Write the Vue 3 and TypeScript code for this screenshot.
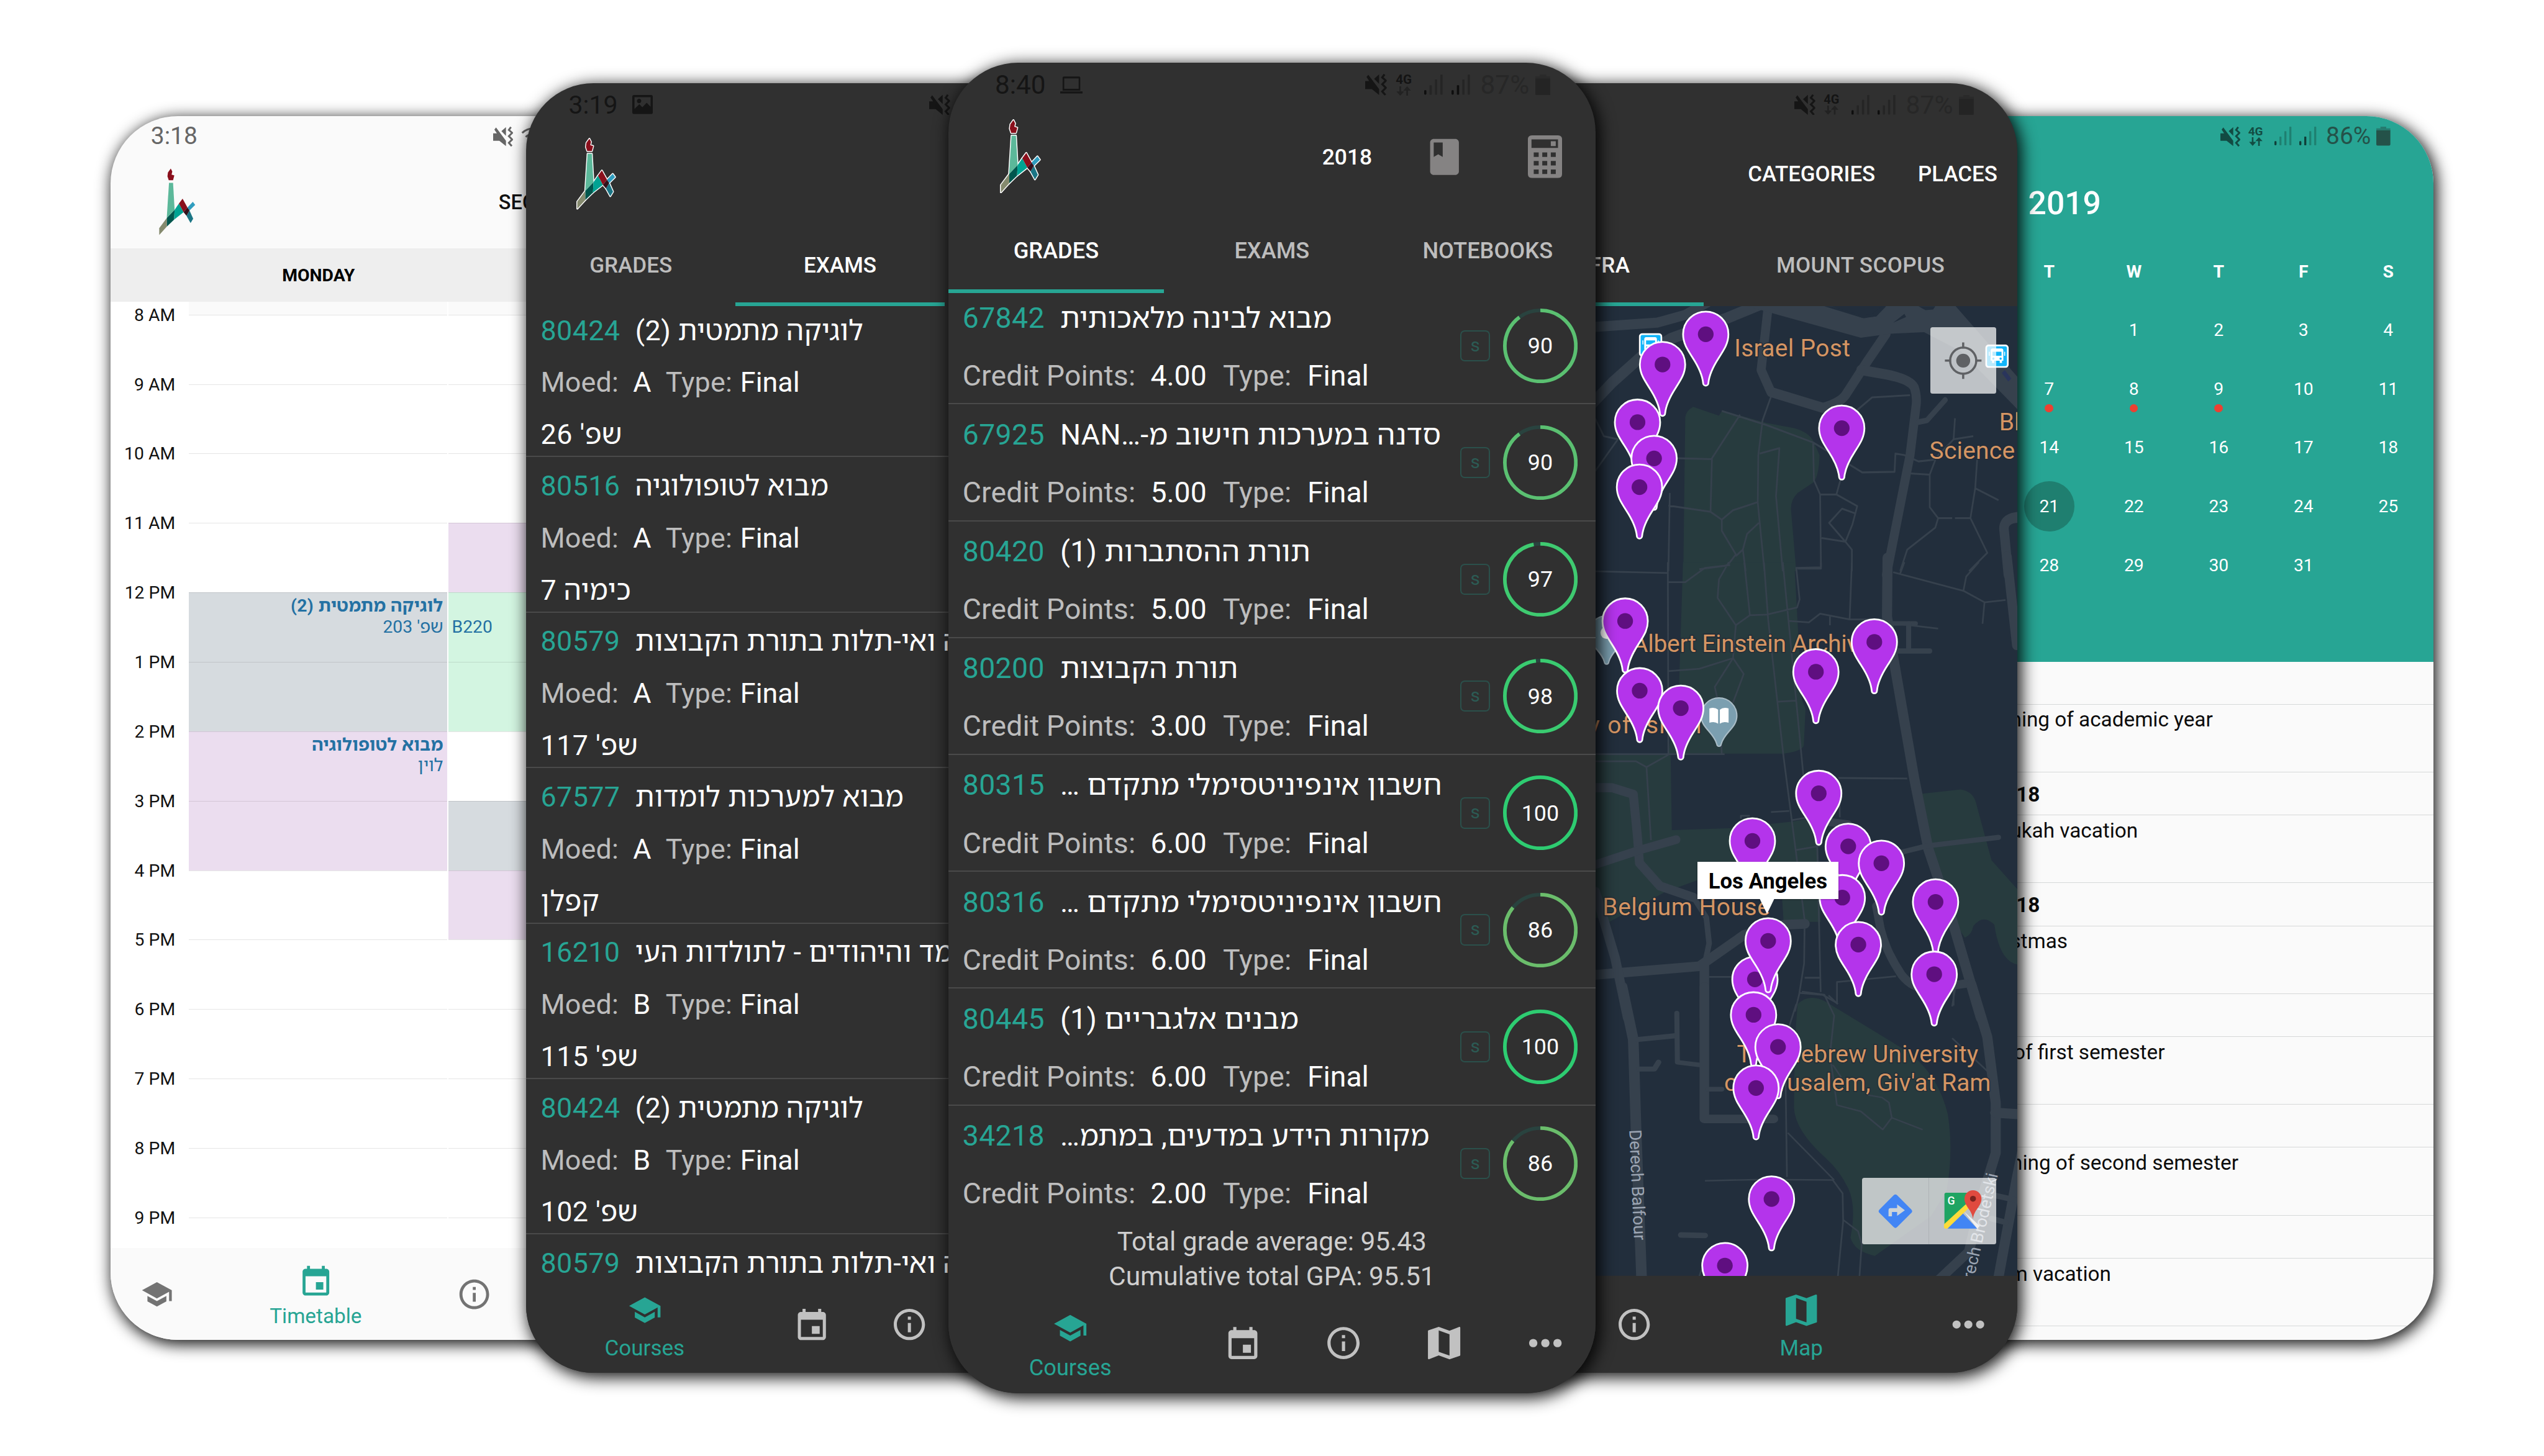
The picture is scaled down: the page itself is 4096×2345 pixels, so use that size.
<script setup lang="ts">
interface NavItem { icon: string; label?: string; active?: boolean }
interface Phone {
  kind: 'timetable' | 'exams' | 'grades' | 'map' | 'calendar'
  time: string
  timeIcon?: string
  battery: string
  nav: NavItem[]
}

const phones: Phone[] = [
  { kind: 'timetable', time: '3:18', battery: '', nav: [{ icon: 'school' }, { icon: 'event', label: 'Timetable', active: true }, { icon: 'info' }, { icon: 'map' }, { icon: 'more' }] },
  { kind: 'exams', time: '3:19', timeIcon: 'picture', battery: '', nav: [{ icon: 'school', label: 'Courses', active: true }, { icon: 'event' }, { icon: 'info' }, { icon: 'map' }, { icon: 'more' }] },
  { kind: 'grades', time: '8:40', timeIcon: 'laptop', battery: '87%', nav: [{ icon: 'school', label: 'Courses', active: true }, { icon: 'event' }, { icon: 'info' }, { icon: 'map' }, { icon: 'more' }] },
  { kind: 'map', time: '', battery: '87%', nav: [{ icon: 'school' }, { icon: 'event' }, { icon: 'info' }, { icon: 'map', label: 'Map', active: true }, { icon: 'more' }] },
  { kind: 'calendar', time: '', battery: '86%', nav: [] },
]

const logo = [
  { fill: '#8a0f1c', d: 'M27.5 0 20.8 9 19.6 18 22.7 27H33L36 16 29.4 14 31.2 7Z' },
  { fill: '#5cb89a', d: 'M23.3 33H33L36.7 95.5 18 114Z' },
  { fill: '#858a6e', d: 'M0 138 18.4 114V134L0 153.6Z' },
  { fill: '#00564d', d: 'M18.4 114 36.7 95.5 35.5 118 18.4 134Z' },
  { fill: '#00a393', d: 'M36.7 95.5 47 81 58 101 35.5 118Z' },
  { fill: '#8a0f1c', d: 'M47 81 55.7 69.6 67.3 90 58 101Z' },
  { fill: '#2f9dbf', d: 'M67.3 90 80.2 77 85.7 84 72.2 97Z' },
  { fill: '#1b7585', d: 'M65 109 72.2 97 81 116 74.7 126Z' },
  { fill: '#33101b', d: 'M58 101 67.3 90 72.2 97 65 109Z' },
]

const hours = ['8 AM', '9 AM', '10 AM', '11 AM', '12 PM', '1 PM', '2 PM', '3 PM', '4 PM', '5 PM', '6 PM', '7 PM', '8 PM', '9 PM']

interface Lesson { row: number; span: number; tone: string; title?: string; room?: string; ltr?: boolean }
const days: Lesson[][] = [
  [
    { row: 5, span: 2, tone: 'grey', title: 'לוגיקה מתמטית (2)', room: "שפ' 203" },
    { row: 7, span: 2, tone: 'lilac', title: 'מבוא לטופולוגיה', room: 'לוין' },
  ],
  [
    { row: 4, span: 1, tone: 'lilac' },
    { row: 5, span: 2, tone: 'green', title: '\u00a0', room: 'B220', ltr: true },
    { row: 8, span: 1, tone: 'grey' },
    { row: 9, span: 1, tone: 'lilac' },
  ],
]

const exams = [
  { code: '80424', title: 'לוגיקה מתמטית (2)', moed: 'A', room: "שפ' 26" },
  { code: '80516', title: 'מבוא לטופולוגיה', moed: 'A', room: 'כימיה 7' },
  { code: '80579', title: 'ה ואי-תלות בתורת הקבוצות', moed: 'A', room: "שפ' 117" },
  { code: '67577', title: 'מבוא למערכות לומדות', moed: 'A', room: 'קפלן' },
  { code: '16210', title: 'מד והיהודים - לתולדות העי', moed: 'B', room: "שפ' 115" },
  { code: '80424', title: 'לוגיקה מתמטית (2)', moed: 'B', room: "שפ' 102" },
  { code: '80579', title: 'ה ואי-תלות בתורת הקבוצות', moed: '', room: '' },
]

const grades = [
  { code: '67842', title: 'מבוא לבינה מלאכותית', points: '4.00', grade: 90, color: '#5bc071' },
  { code: '67925', title: 'סדנה במערכות חישוב מ-…NAN', points: '5.00', grade: 90, color: '#5bc071' },
  { code: '80420', title: 'תורת ההסתברות (1)', points: '5.00', grade: 97, color: '#3fca70' },
  { code: '80200', title: 'תורת הקבוצות', points: '3.00', grade: 98, color: '#3acb70' },
  { code: '80315', title: 'חשבון אינפיניטסימלי מתקדם …', points: '6.00', grade: 100, color: '#2ecc71' },
  { code: '80316', title: 'חשבון אינפיניטסימלי מתקדם …', points: '6.00', grade: 86, color: '#6bbd6b' },
  { code: '80445', title: 'מבנים אלגבריים (1)', points: '6.00', grade: 100, color: '#2ecc71' },
  { code: '34218', title: 'מקורות הידע במדעים, במתמ…', points: '2.00', grade: 86, color: '#6bbd6b' },
]

const pins: [number, number][] = [
  [724.6, 577.6], [625.4, 647], [568, 779.5], [606, 862.7], [572.5, 928.6], [1036.7, 793.2],
  [539.6, 1236], [1111.5, 1284], [977.4, 1352.5], [573, 1396], [667.3, 1436], [983.9, 1631.5],
  [831.7, 1740.7], [1051.6, 1753.2], [1038, 1871], [1127.7, 1792], [1252, 1880.8], [1074.8, 1978.9],
  [1248.9, 2046.7], [837.5, 2058.5], [867.8, 1970.3], [834.3, 2140], [890.4, 2213.7], [840, 2308],
  [875.5, 2562.8], [768.5, 2715.6],
]

interface Tile { frame: string; parks: string[]; wide: [number, string][]; thin: string }
/* The map is stored in three tiles, each in its own survey grid. */
const tiles: Tile[] = [
  {
    frame: 'matrix(.6448 0 0 .7237 451.9 -14.4)',
    parks: ['M343 1568 350 1080Q352 1060 378 1047L470 1075 482 1058 535 1072 640 1098 740 1115Q795 1130 808 1160L828 1200Q825 1280 800 1290L750 1320Q722 1345 727 1380L745 1568Z'],
    wide: [
      [32, 'M0 795 250 780 350 755 430 715'],
      [36, 'M10 1045 90 970 190 890 300 830 500 765 650 710'],
      [32, 'M645 730 620 930 655 1000 840 1050Q900 1035 920 1010L1000 900 1065 815'],
      [32, 'M975 930 1070 945Q1150 960 1165 985 1175 1010 1172 1040L1150 1200 1066 1580'],
      [18, 'M1180 1095 1210 1090 1275 1025'],
      [34, 'M1550 1395 1515 1400Q1480 1410 1485 1440L1500 1580'],
    ],
    thin: 'M655 1015 625 1090 610 1200 608 1350 632 1568M480 1060 640 1105 805 1160 870 1195 980 1255 1095 1253 1098 1195 1130 1200 1180 1220 1235 1215M545 1072 445 1210 440 1380 480 1405V1440L530 1515 500 1550 400 1562M320 1210 445 1213M295 1320 290 1568M290 1360 440 1380M480 1405 520 1375 605 1350M615 1195 685 1178 673 1330 697 1568M612 1415 570 1450 555 1500 565 1568M555 1500 530 1520M805 1160 808 1280 830 1325 833 1560H750M830 1325H888L905 1270M888 1325 962 1362 945 1420 920 1475 835 1463M955 1385 908 1370 862 1415 920 1475 943 1500V1568M905 1100 1015 1017 1150 1010M1150 1258 1220 1262V1365L1250 1400H1300M1240 1215 1220 1262M1310 1083 1305 1150 1240 1210M1305 1150 1375 1140M1390 1200 1382 1305 1365 1400H1310M1382 1305 1465 1343M1365 1400 1425 1510 1360 1568M1250 1400 1240 1430 1140 1500 1115 1568M30 1085 60 1140 110 1150 30 1250',
  },
  {
    frame: 'matrix(.6448 0 0 .658 451.9 1099.8)',
    parks: [
      'M342 0 328 430 290 668H700Q765 660 772 640L778 512 765 480 738 0Z',
      'M0 668 298 672 302 935 520 928 730 905 820 890 832 1255H700L690 1100H420L280 1150 80 1255 0 1230Z',
      'M1190 808 1330 793Q1375 800 1385 840L1440 1040 1540 1150V1405Q1470 1400 1450 1265 1410 1225 1375 1270 1370 1300 1345 1310L1290 1230 1250 1080Z',
    ],
    wide: [
      [36, 'M1070 -15 1068 190 1090 330 1165 755 1215 1000 1300 1250 1402 1590'],
      [16, 'M1080 214H1170'], [18, 'M1145 215V300'], [18, 'M1100 310H1220'],
      [34, 'M1495 -20 1530 290'],
      [32, 'M0 787H90L165 810 180 960 187 1050 260 1130 380 1170'],
      [20, 'M380 1170 425 1240 435 1330 420 1400'],
      [30, 'M0 1065 185 1005 318 968'],
      [34, 'M0 1442 400 1410 560 1300 700 1265 776 1262'],
      [34, 'M30 1150 100 1380 145 1590'],
      [34, 'M418 1400V1590'],
      [18, 'M1120 1012 1210 990 1465 960'],
      [28, 'M850 905 930 915'],
      [30, 'M1030 1200 1045 1280Q1065 1360 1120 1440 1160 1490 1220 1488L1350 1470'],
    ],
    thin: 'M30 32 288 38M288 0 290 670M290 70H350L420 20 510 10M505 0 470 60 465 125 530 220 520 335 558 390 520 490M520 335 455 435 470 500 480 670M290 380 400 372 520 335M530 220 580 185 640 183 748 158 757 130 745 20 833 18V0M560 0 580 185M630 0 645 200 700 680 745 1020 775 1250 773 1400 755 1510 740 1568M697 0 720 230 770 740 820 1000 832 1500M720 205 790 210 830 180 935 200 1055 200M865 190V220M943 0 935 200M680 487 745 483M895 753 1140 755M898 780 900 890M30 670H490M30 695H175L212 715 290 672M212 715 228 970M655 872 720 868M730 900 820 885M740 1005 830 990M548 895V885H580M1090 35 1340 100 1415 140 1490 132M1415 140 1408 215M1340 100 1350 50 1395 0M1130 0 1115 40M1105 215 1250 232M775 1450H833M435 1447H520M890 1540V1465L1100 1445M755 1503 840 1510 893 1540M1310 1490 1300 1550',
  },
  {
    frame: 'matrix(.6448 0 0 .579 451.9 2079.9)',
    parks: ['M750 60Q790 15 850 50L1130 240Q1250 330 1285 500 1305 650 1280 800L1225 900 1025 1058Q950 1040 938 985 960 860 930 790 900 720 850 670 740 560 737 470L740 200Z'],
    wide: [
      [38, 'M125 -10 165 200 175 560 195 1160'],
      [20, 'M180 200 315 185'], [18, 'M320 95 322 290 410 302'], [20, 'M185 317H240L255 290'],
      [34, 'M418 -10V515H664'], [18, 'M430 397H480'], [22, 'M335 975 420 977'],
      [36, 'M1368 -20 1425 190 1455 450V650L1400 850 1360 1040 1255 1150'],
      [40, 'M1455 490 1550 497'], [36, 'M1550 640 1530 750 1462 1160'], [22, 'M1440 815 1540 840M1440 910 1490 925'],
    ],
    thin: 'M745 60 705 200 712 745M420 760 620 755 875 757 910 810 912 920 893 1140M715 570 880 757M912 915 965 960 978 1010 970 1140M765 10 845 22 880 105 865 260 890 460 975 485 1053 557 1085 510 1195 557M1085 510 1075 450 1050 430 1000 420M875 300 905 350M1300 195 1430 330M1305 0V65M400 1140 412 1095M860 25 893 60',
  },
]

const weekdays = ['S', 'M', 'T', 'W', 'T', 'F', 'S']
const monthCells: (number | null)[] = [null, null, null, ...Array.from({ length: 31 }, (_, i) => i + 1), null]
const marked = [7, 8, 9]

const agenda = [
  { date: 'October 14, 2018', dateEnd: 436, title: 'Beginning of academic year', end: 907 },
  { date: 'December 9, 2018', dateEnd: 489, title: 'Hanukah vacation', end: 726 },
  { date: 'December 25, 2018', dateEnd: 489, title: 'Christmas', end: 556 },
  { date: 'January 20, 2019', dateEnd: 436, title: 'End of first semester', end: 791 },
  { date: 'March 3, 2019', dateEnd: 400, title: 'Beginning of second semester', end: 969 },
  { date: 'March 21, 2019', dateEnd: 400, title: 'Purim vacation', end: 661 },
]
</script>

<template>
  <svg class="defs" width="0" height="0">
    <symbol id="mute" viewBox="0 0 48 48">
      <path d="M0 16H9L3 7 7 2 31 34V47L15 34H0ZM20 11 31 1V22Z" />
      <path d="M43 1 38 8 46 15 38 23 46 31 38 39 45 47" fill="none" stroke="currentColor" stroke-width="4.5" />
    </symbol>
    <symbol id="wifi" viewBox="0 0 60 48">
      <g fill="none" stroke="currentColor" stroke-width="5"><path d="M3 16A38 38 0 0 1 57 16M12 26A26 26 0 0 1 48 26M21 35A13 13 0 0 1 39 35" /></g>
      <circle cx="30" cy="43" r="4" />
    </symbol>
    <symbol id="arrows" viewBox="0 0 36 22">
      <path d="M8 0H12V12H19L10 22 1 12H8ZM24 22H28V10H35L26 0 17 10H24Z" />
    </symbol>
    <symbol id="picture" viewBox="0 0 47 44">
      <path fill-rule="evenodd" d="M4 0H43Q47 0 47 4V40Q47 44 43 44H4Q0 44 0 40V4Q0 0 4 0ZM5 5V32L16 21 23 28 33 18 42 27V5ZM14 9A5 5 0 1 1 14 18.500 5 5 0 0 1 14 9Z" />
    </symbol>
    <symbol id="laptop" viewBox="0 0 56 42">
      <path fill-rule="evenodd" d="M9 0H47Q50 0 50 3V35H6V3Q6 0 9 0ZM10 4.500V30.500H46V4.500ZM0 37H56V42H0Z" />
    </symbol>
    <symbol id="school" viewBox="-1.15 -1.15 26.3 26.3"><path d="M5 13.180v4L12 21l7-3.820v-4L12 17l-7-3.820zM12 3L1 9l11 6 9-4.910V17h2V9L12 3z" /></symbol>
    <symbol id="event" viewBox="0 -1 24 24"><path d="M17 12h-5v5h5v-5zM16 1v2H8V1H6v2H5c-1.110 0-1.990.9-1.990 2L3 19c0 1.100.89 2 2 2h14c1.100 0 2-.9 2-2V5c0-1.100-.9-2-2-2h-1V1h-2zm3 18H5V8h14v11z" /></symbol>
    <symbol id="info" viewBox="0 0 24 24"><path d="M11 17h2v-6h-2v6zm1-15C6.480 2 2 6.480 2 12s4.480 10 10 10 10-4.480 10-10S17.520 2 12 2zm0 18c-4.410 0-8-3.590-8-8s3.590-8 8-8 8 3.590 8 8-3.590 8-8 8zM11 9h2V7h-2v2z" /></symbol>
    <symbol id="map" viewBox="26.5 26.5 459 459"><path d="M437.333 64c-2.176 0-4.396 1.369-9.176 3.207L320 108.802 192 64 71.469 104.531C67.197 105.604 64 109.864 64 115.197v322.136C64 443.729 68.271 448 74.666 448c1.828 0 6.505-2.330 9.087-3.319L192 403.197 320 448l120.531-40.531c4.271-1.073 7.469-5.334 7.469-10.667V74.666C448 68.271 443.729 64 437.333 64zM320 405.333l-128-44.802V106.666l128 44.803v253.864z" /></symbol>
    <symbol id="more" viewBox="0 0 86 86"><circle cx="16" cy="43" r="9.300" /><circle cx="43" cy="43" r="9.300" /><circle cx="70" cy="43" r="9.300" /></symbol>
    <symbol id="book" viewBox="0 0 24 24"><path d="M18 2H6c-1.100 0-2 .9-2 2v16c0 1.100.9 2 2 2h12c1.100 0 2-.9 2-2V4c0-1.100-.9-2-2-2zM6 4h5v8l-2.500-1.500L6 12V4z" /></symbol>
    <symbol id="calc" viewBox="0 0 76 95">
      <path fill-rule="evenodd" d="M9 0H67Q76 0 76 9V86Q76 95 67 95H9Q0 95 0 86V9Q0 0 9 0ZM8 9V28H67V9ZM13 38V48H24V38ZM32 38V48H43V38ZM51 38V48H62V38ZM13 57V67H24V57ZM32 57V67H43V57ZM51 57V67H62V57ZM13 76V86H24V76ZM32 76V86H43V76ZM51 76V86H62V76Z" />
      <path d="M51 13H62V24H51Z" />
    </symbol>
    <symbol id="logo" viewBox="-2 -2 89.7 157.6" preserveAspectRatio="none"><path v-for="(p, i) in logo" :key="i" :d="p.d" :fill="p.fill" /></symbol>
    <symbol id="logo-edge" viewBox="-2 -2 89.7 157.6" preserveAspectRatio="none">
      <path v-for="(p, i) in logo" :key="i" :d="p.d" fill="#fff" stroke="#fff" stroke-width="4" stroke-linejoin="round" />
    </symbol>
    <symbol id="bus" viewBox="0 0 52 52">
      <rect x="2" y="2" width="48" height="48" rx="6" fill="#12b5f9" stroke="#fff" stroke-width="4" />
      <path fill="#fff" fill-rule="evenodd" d="M16 9H36Q40 9 40 14V36H37V41H32V36H20V41H15V36H12V14Q12 9 16 9ZM16 16V25H36V16ZM18 29A2.500 2.500 0 1 0 18 34 2.500 2.500 0 1 0 18 29ZM34 29A2.500 2.500 0 1 0 34 34 2.500 2.500 0 1 0 34 29ZM8 16H10V25H8ZM42 16H44V25H42Z" />
    </symbol>
  </svg>

  <div class="stage">
    <div v-for="p in phones" :key="p.kind" class="slot" :class="p.kind">
      <div class="phone">
        <div class="status">
          <span class="time">{{ p.time }}</span>
          <svg v-if="p.timeIcon" class="time-icon"><use :href="'#' + p.timeIcon" /></svg>
          <div class="tray">
            <svg class="mute"><use href="#mute" /></svg>
            <svg v-if="!p.battery" class="wifi"><use href="#wifi" /></svg>
            <template v-else>
              <div class="lte"><b>4G</b><svg><use href="#arrows" /></svg></div>
              <svg v-for="n in 2" :key="n" class="signal" viewBox="0 0 42 46">
                <rect class="on" x="0" y="35" width="5" height="10" rx="2" />
                <rect :class="{ on: n === 2 && p.kind !== 'map' }" x="12" y="24" width="5" height="21" rx="1" />
                <rect x="24" y="11" width="5" height="34" rx="1" />
                <rect x="36" y="0" width="5" height="45" rx="1" />
              </svg>
              <span class="pct">{{ p.battery }}</span>
              <svg class="battery" viewBox="0 0 34 46"><path opacity=".5" d="M10 0H24V4H34V10H0V4H10Z" /><path d="M0 9H34V43Q34 46 31 46H3Q0 46 0 43Z" /></svg>
            </template>
          </div>
        </div>

        <template v-if="p.kind === 'timetable'">
          <div class="appbar">
            <svg class="logo"><use href="#logo" /></svg>
            <span class="semester">SECOND SEMESTER</span>
          </div>
          <div class="day-head"><span>MONDAY</span></div>
          <div class="week">
            <div class="hours"><div v-for="h in hours" :key="h">{{ h }}</div></div>
            <div v-for="(day, di) in days" :key="di" class="day">
              <i v-for="(h, hi) in hours" :key="h" :style="{ gridRow: hi + 1 }"></i>
              <div v-for="(l, li) in day" :key="li" class="lesson" :class="[l.tone, { ltr: l.ltr }]" :style="{ gridRow: `${l.row} / span ${l.span}` }">
                <b>{{ l.title }}</b><span>{{ l.room }}</span>
              </div>
            </div>
          </div>
        </template>

        <template v-else-if="p.kind === 'exams'">
          <div class="appbar">
            <svg class="logo"><use href="#logo-edge" /><use href="#logo" /></svg>
          </div>
          <div class="tabs"><span>GRADES</span><span class="on">EXAMS</span><span></span></div>
          <div class="list exam-list">
            <div v-for="(e, i) in exams" :key="i" class="exam">
              <div class="line"><span class="code">{{ e.code }}</span><span class="title" dir="rtl">{{ e.title }}</span></div>
              <template v-if="e.moed">
                <div class="line"><span class="label moed">Moed:</span><span class="moed-value">{{ e.moed }}</span><span class="label type">Type:</span><span>Final</span></div>
                <div class="line"><span class="title" dir="rtl">{{ e.room }}</span></div>
              </template>
            </div>
          </div>
        </template>

        <template v-else-if="p.kind === 'grades'">
          <div class="appbar">
            <svg class="logo"><use href="#logo-edge" /><use href="#logo" /></svg>
            <span class="year">2018</span>
            <svg class="book"><use href="#book" /></svg>
            <svg class="calc"><use href="#calc" /></svg>
          </div>
          <div class="tabs"><span class="on">GRADES</span><span>EXAMS</span><span>NOTEBOOKS</span></div>
          <div class="list grade-list">
            <div v-for="g in grades" :key="g.code" class="grade">
              <div class="info">
                <div class="line"><span class="code">{{ g.code }}</span><span class="title" dir="rtl">{{ g.title }}</span></div>
                <div class="line"><span class="label points">Credit Points:</span><span class="points-value">{{ g.points }}</span><span class="label type">Type:</span><span>Final</span></div>
              </div>
              <div class="badge">s</div>
              <div class="ring">
                <svg viewBox="0 0 166 166">
                  <circle cx="83" cy="83" r="79" stroke="#29433f" />
                  <circle cx="83" cy="83" r="79" :stroke="g.color" pathLength="100" :stroke-dasharray="`${g.grade} 100`" transform="rotate(-90 83 83)" />
                </svg>
                <span>{{ g.grade }}</span>
              </div>
            </div>
          </div>
          <div class="totals"><div>Total grade average: 95.43</div><div>Cumulative total GPA: 95.51</div></div>
        </template>

        <template v-else-if="p.kind === 'map'">
          <div class="appbar right"><span>CATEGORIES</span><span>PLACES</span></div>
          <div class="tabs"><span class="on">EDMOND SAFRA</span><span>MOUNT SCOPUS</span></div>
          <div class="map-view">
            <svg class="ground" viewBox="0 512 1440 2226">
              <rect y="512" width="1440" height="2226" fill="#222e3c" />
              <g v-for="(t, i) in tiles" :key="i" :transform="t.frame">
                <path v-for="d in t.parks" :key="d" :d="d" fill="#273b3e" />
              </g>
              <g v-for="(t, i) in tiles" :key="'r' + i" :transform="t.frame" fill="none" stroke="#36414d" stroke-linejoin="round">
                <path :d="t.thin" stroke-width="6" />
                <path v-for="w in t.wide" :key="w[1]" :d="w[1]" :stroke-width="w[0]" stroke-linecap="round" />
              </g>
              <g :transform="tiles[0].frame">
                <path fill="#36414d" d="M560 720H850L980 765 1030 760 1070 720H1305L1540 960V1062L1330 870 1200 810 1080 815 975 828 700 760 560 725Z" />
                <path fill="#222e3c" d="M845 728 985 766 1030 760 1065 728H1050L1015 752 980 757 870 728ZM1090 780 1130 752 1136 762ZM1180 728 1205 740 1232 738 1240 728Z" />
                <path fill="none" stroke="#2a355c" stroke-width="14" d="M1482 935 1505 962" />
              </g>
              <g transform="translate(755 1452.5)"><path d="M0-41A41 41 0 0 1 41 0C41 28 12 38 5 65A5 5 0 0 1-5 65C-12 38-41 28-41 0A41 41 0 0 1 0-41Z" fill="#7b9fb0" stroke="#a9bcc6" stroke-width="3" /><path d="M-22-17Q-10-21-2-14V18Q-10 12-22 16ZM22-17Q10-21 2-14V18Q10 12 22 16Z" fill="#fff" /></g>
              <g transform="translate(497 1264)"><path d="M0-41A41 41 0 0 1 41 0C41 28 12 38 5 65A5 5 0 0 1-5 65C-12 38-41 28-41 0A41 41 0 0 1 0-41Z" fill="#7b9fb0" stroke="#a9bcc6" stroke-width="3" /><circle r="14" cy="-2" fill="#fff" /></g>
              <use href="#bus" x="571" y="574" width="54" height="54" />
              <use href="#bus" x="1366" y="600" width="54" height="54" />
              <g class="poi">
                <text x="790" y="627" textLength="266">Israel Post</text>
                <text x="1398" y="797">Bloomfield</text>
                <text x="1238" y="862" textLength="196">Science</text>
                <text x="556" y="1306" textLength="576">Albert Einstein Archives</text>
                <text x="455" y="1493" textLength="260">y of Israel</text>
                <text x="488" y="1910" textLength="384">Belgium House</text>
                <text x="796" y="2248" textLength="554">The Hebrew University</text>
                <text x="767" y="2314" textLength="612">of Jerusalem, Giv'at Ram</text>
              </g>
              <g class="street">
                <text transform="translate(549 2403) rotate(87.500)" textLength="254">Derech Balfour</text>
                <text transform="translate(1329 2793) rotate(-77)" textLength="295">Derech Brodetski</text>
              </g>
              <g v-for="(c, i) in pins" :key="i" :transform="`translate(${c[0]} ${c[1] - 1})`">
                <path d="M0-52A52 52 0 0 1 52 0C52 20 43 34 30 54 17 74 8 92 6 112A6 6 0 0 1-6 112C-8 92-17 74-30 54-43 34-52 20-52 0A52 52 0 0 1 0-52Z" fill="#b434eb" stroke="#fff" stroke-width="4" />
                <circle r="18" fill="#5f0f80" />
              </g>
            </svg>
            <div class="callout">Los Angeles</div>
            <div class="locate">
              <svg viewBox="0 0 88 88"><g fill="none" stroke="#5f6164" stroke-width="5"><circle cx="44" cy="44" r="30" /><path d="M44 2V16M44 72V86M2 44H16M72 44H86" /></g><circle cx="44" cy="44" r="16" fill="#5f6164" /></svg>
            </div>
            <div class="routes">
              <div><svg viewBox="0 0 80 80"><path fill="#4285f4" d="M36 3Q40-1 44 3L77 36Q81 40 77 44L44 77Q40 81 36 77L3 44Q-1 40 3 36Z" /><path fill="#cdd3d6" d="M24 52V38Q24 33 29 33H44V24L62 38 44 51V42H32V52Z" /></svg></div>
              <div>
                <svg class="gmaps" viewBox="0 0 88 88">
                  <path fill="#1fa463" d="M5 6H55V40L4 86 1 82V10Q1 6 5 6Z" />
                  <path fill="#4285f4" d="M42 52 78 90H8Z" />
                  <path fill="#fddb3a" d="M0 80 52 32 58 42 8 90H4Q0 90 0 86Z" />
                  <path fill="#f1f1f1" d="M47 50 84 84 78 90Z" />
                  <path fill="#e04a3f" d="M68 0A20 20 0 0 1 88 20C88 38 70 46 68 68 66 46 48 38 48 20A20 20 0 0 1 68 0Z" />
                  <circle cx="68" cy="20" r="7" fill="#7b231e" />
                  <text x="8" y="34">G</text>
                </svg>
              </div>
            </div>
          </div>
        </template>

        <template v-else>
          <div class="month">
            <div class="month-title">May 2019</div>
            <div class="grid heads"><span v-for="(w, i) in weekdays" :key="i">{{ w }}</span></div>
            <div class="grid dates">
              <span v-for="(d, i) in monthCells" :key="i" :class="{ today: d === 21 }"><em>{{ d }}</em><i v-if="d && marked.includes(d)"></i></span>
            </div>
          </div>
          <div class="agenda">
            <template v-for="a in agenda" :key="a.title">
              <div class="date"><span :style="{ width: a.dateEnd + 'px' }">{{ a.date }}</span></div>
              <div class="entry"><span :style="{ width: a.end + 'px' }">{{ a.title }}</span></div>
            </template>
          </div>
        </template>

        <div v-if="p.nav.length" class="nav">
          <div v-for="n in p.nav" :key="n.icon" :class="{ active: n.active }">
            <svg><use :href="'#' + n.icon" /></svg>
            <span v-if="n.label">{{ n.label }}</span>
          </div>
        </div>
      </div>
    </div>
  </div>
</template>

<style>
body { background: #fff; overflow: hidden; }
</style>

<style scoped>
svg { display: block; flex: none; fill: currentColor; }
.defs { position: absolute; }
.stage {
  zoom: 0.7238;
  width: 5659px;
  height: 3240px;
  display: flex;
  align-items: center;
  justify-content: center;
  background: #fff;
  font-family: Roboto, "Noto Sans Hebrew", "Liberation Sans", sans-serif;
}
.slot { position: relative; flex: none; }
.timetable, .calendar { z-index: 1; width: 1325px; height: 2723px; }
.exams, .map { z-index: 2; width: 1396px; height: 2869px; }
.grades { z-index: 3; width: 1440px; height: 2960px; margin: 0 -457.5px; }
.exams { margin-left: -400.5px; }
.map { margin-right: -400px; }
.phone {
  width: 1440px;
  height: 2960px;
  display: flex;
  flex-direction: column;
  overflow: hidden;
  border-radius: 155px;
  background: #303030;
  color: #fff;
  box-shadow: 6px 8px 36px 3px rgba(0, 0, 0, 0.9);
}
.timetable .phone, .calendar .phone { zoom: 0.92; border-radius: 163px; background: #fafafa; color: #111; }
.exams .phone, .map .phone { zoom: 0.9693; }

/* status bar */
.status { flex: none; height: 98px; display: flex; align-items: center; padding-left: 104px; color: #151515; font-size: 58.5px; line-height: 60px; }
.timetable .status { color: #666; }
.timetable .status, .exams .status { padding-left: 97px; }
.time-icon { width: 50px; height: 44px; margin-left: 32px; }
.tray { margin-left: auto; width: 512px; display: flex; align-items: center; }
.timetable .tray, .exams .tray, .calendar .tray { width: 515px; }
.mute { width: 48px; height: 48px; }
.wifi { width: 60px; height: 46px; margin-left: 18px; }
.lte { width: 37px; margin: 0 27px 0 19px; display: flex; flex-direction: column; align-items: center; gap: 2px; color: #141414; }
.lte b { font-size: 28.5px; line-height: 24px; font-weight: 700; }
.lte svg { width: 36px; height: 21px; color: #222; }
.signal { width: 42px; height: 46px; margin-right: 18px; color: #252525; }
.signal .on { fill: #0e0e0e; }
.pct { width: 109px; margin-left: 5px; color: #272727; }
.battery { width: 34px; height: 46px; margin-left: 13px; color: #242424; }
.calendar .status { color: #124b43; }
.calendar .lte, .calendar .lte svg { color: #134c43; }
.calendar .signal { color: #1f8071; }
.calendar .signal .on { fill: #0f3f38; }
.calendar .pct, .calendar .battery { color: #245249; }

/* app bar and tabs */
.appbar { flex: none; height: 222px; display: flex; align-items: center; padding-left: 115px; font-size: 49.7px; font-weight: 500; }
.logo { width: 91px; height: 165px; margin-top: -3px; }
.semester { margin-left: 732px; white-space: nowrap; font-size: 49px; }
.year { margin-left: auto; font-size: 49px; }
.book { width: 96px; height: 96px; margin: 0 138px 0 113px; color: #858383; }
.calc { width: 76px; height: 95px; margin-right: 74px; color: #858383; }
.right { justify-content: flex-end; gap: 98px; padding-right: 46px; }
.tabs { flex: none; height: 192px; display: flex; font-size: 50px; font-weight: 500; color: #bdbdbd; }
.tabs span { flex: 1 1 0; display: flex; align-items: center; justify-content: center; border-bottom: 9px solid transparent; padding-top: 11px; }
.tabs .on { color: #fff; border-color: #27a594; }
.map .tabs span { letter-spacing: 0.6px; }

/* course rows */
.list { flex: none; overflow: hidden; font-size: 64px; line-height: 80px; white-space: nowrap; }
.line { display: flex; align-items: center; }
.code { color: #27a594; width: 217px; letter-spacing: 0.5px; }
.title { letter-spacing: 0.6px; }
.label { color: #bdbdbd; letter-spacing: 0.2px; }
.exam, .grade { box-sizing: border-box; }
.exam-list { height: 2226px; }
.exam { height: 357px; border-bottom: 4px solid #4a4a4a; padding: 7px 0 0 33px; }
.exam:first-child { margin-top: -11px; }
.exam .line { height: 119.5px; }
.moed { width: 212px; }
.moed-value { width: 75px; }
.exam .type { width: 171px; }
.grade-list { height: 2066px; }
.grade { height: 260px; border-bottom: 4px solid #4a4a4a; padding: 1px 40px 0 32px; display: flex; align-items: center; }
.grade:first-child { margin-top: -12px; }
.grade:last-child { border-color: transparent; }
.info { flex: 1; padding-top: 7px; }
.info .line { height: 129px; }
.points { width: 418px; }
.points-value { width: 161px; }
.grade .type { width: 188px; }
.badge { flex: none; width: 60px; height: 64px; margin-right: 29px; border: 4px solid #2b504b; border-radius: 10px; color: #2c5b54; font-size: 41px; line-height: 61px; text-align: center; }
.ring { flex: none; width: 166px; height: 166px; display: grid; place-items: center; }
.ring > * { grid-area: 1 / 1; }
.ring svg { width: 166px; height: 166px; fill: none; stroke-width: 8; }
.ring circle { fill: none; }
.ring span { font-size: 49.5px; line-height: 60px; padding-top: 3px; }
.totals { flex: none; height: 160px; box-sizing: border-box; padding-top: 7px; text-align: center; font-size: 58.6px; line-height: 77px; color: #cfcfcf; }

/* bottom navigation */
.nav { flex: none; height: 222px; display: flex; background: inherit; color: #c1c1c1; font-size: 50px; }
.nav > div { width: 224.3px; display: flex; flex-direction: column; align-items: center; justify-content: center; }
.nav svg { width: 86px; height: 86px; }
.nav .active { width: 543px; color: #27a594; justify-content: flex-start; padding-top: 35px; gap: 14px; line-height: 60px; box-sizing: border-box; }
.timetable .nav { color: #737373; background: #fafafa; }

/* timetable */
.day-head { flex: none; height: 129px; background: #eee; display: flex; align-items: center; padding: 0 625px 0 190px; justify-content: center; font-size: 42.5px; font-weight: 700; color: #000; }
.week { flex: none; height: 2289px; overflow: hidden; display: flex; background: #fff; font-size: 42.5px; line-height: 50px; }
.hours { width: 189px; margin-top: -52px; flex: none; }
.hours div { height: 168px; box-sizing: border-box; padding-right: 33px; display: flex; align-items: center; justify-content: flex-end; }
.day { flex: none; width: 624px; margin-right: 3px; display: grid; grid-template-rows: repeat(14, 168px); padding-top: 31px; background: linear-gradient(#fafafa 31px, #fff 31px); }
.day i { grid-column: 1; z-index: 1; border-top: 2px solid rgba(0, 0, 0, 0.1); }
.lesson { grid-column: 1; display: flex; flex-direction: column; direction: rtl; padding: 7px 9px; color: #2471a3; line-height: 51px; overflow: hidden; }
.lesson b { letter-spacing: 0.5px; }
.lesson.ltr { direction: ltr; }
.grey { background: #d6dbdf; }
.lilac { background: #ebddef; }
.green { background: #d3f5e1; }

/* campus map */
.map-view { flex: none; position: relative; height: 2226px; overflow: hidden; }
.ground { width: 1440px; height: 2226px; }
.poi { font-size: 55.5px; fill: #d59563; stroke: #222b36; stroke-width: 4px; paint-order: stroke; }
.street { font-size: 39px; fill: #9ca5b3; }
.callout { position: absolute; left: 706px; top: 1275px; width: 323px; height: 86px; background: #fff; color: #000; font-size: 49.5px; font-weight: 700; line-height: 90px; text-align: center; box-shadow: 0 2px 4px rgba(0, 0, 0, 0.4); }
.callout::after { content: ""; position: absolute; left: 143px; top: 84px; border: 18px solid transparent; border-top: 36px solid #fff; border-bottom: 0; }
.locate { position: absolute; left: 1240px; top: 48px; width: 152px; height: 153px; border-radius: 5px; background: rgba(255, 255, 255, 0.71); display: grid; place-items: center; }
.locate svg { width: 88px; height: 88px; }
.routes { position: absolute; left: 1083px; top: 2001px; width: 308px; height: 152px; border-radius: 5px; background: rgba(255, 255, 255, 0.71); display: flex; }
.routes div { flex: 1; display: grid; place-items: center; }
.routes div + div { border-left: 2px solid #aeb3b6; }
.routes svg { width: 79px; height: 79px; overflow: visible; }
.routes .gmaps { width: 86px; height: 86px; margin-top: -10px; }
.gmaps text { font-size: 26px; font-weight: 500; fill: #fff; }

/* academic calendar */
.calendar .status, .month { background: #27a594; }
.month { flex: none; height: 1222px; color: #fff; }
.month-title { width: 637px; height: 226px; line-height: 228px; text-align: right; font-size: 77.5px; font-weight: 500; word-spacing: 7px; }
.grid { display: grid; grid-template-columns: repeat(7, 205px); width: 1435px; margin-left: -1px; font-size: 42.5px; text-align: center; }
.heads { height: 104px; line-height: 104px; font-weight: 700; margin-bottom: 19px; }
.dates { grid-auto-rows: 142px; }
.dates span { position: relative; display: grid; place-items: center; }
.dates em { font-style: normal; width: 122px; height: 122px; line-height: 122px; border-radius: 50%; }
.dates .today em { background: #1f7f70; }
.dates i { position: absolute; left: 92px; top: 107px; width: 20px; height: 20px; border-radius: 50%; background: #eb4132; }
.agenda { flex: none; font-size: 50px; color: #0c0c0c; }
.date, .entry { box-sizing: border-box; border-bottom: 3px solid #d6d8d8; }
.date { height: 104px; line-height: 107px; font-weight: 700; }
.date:first-child { height: 103px; }
.entry { height: 164px; line-height: 60px; padding-top: 7px; }
.date span, .entry span { display: block; text-align: right; white-space: nowrap; }
</style>
